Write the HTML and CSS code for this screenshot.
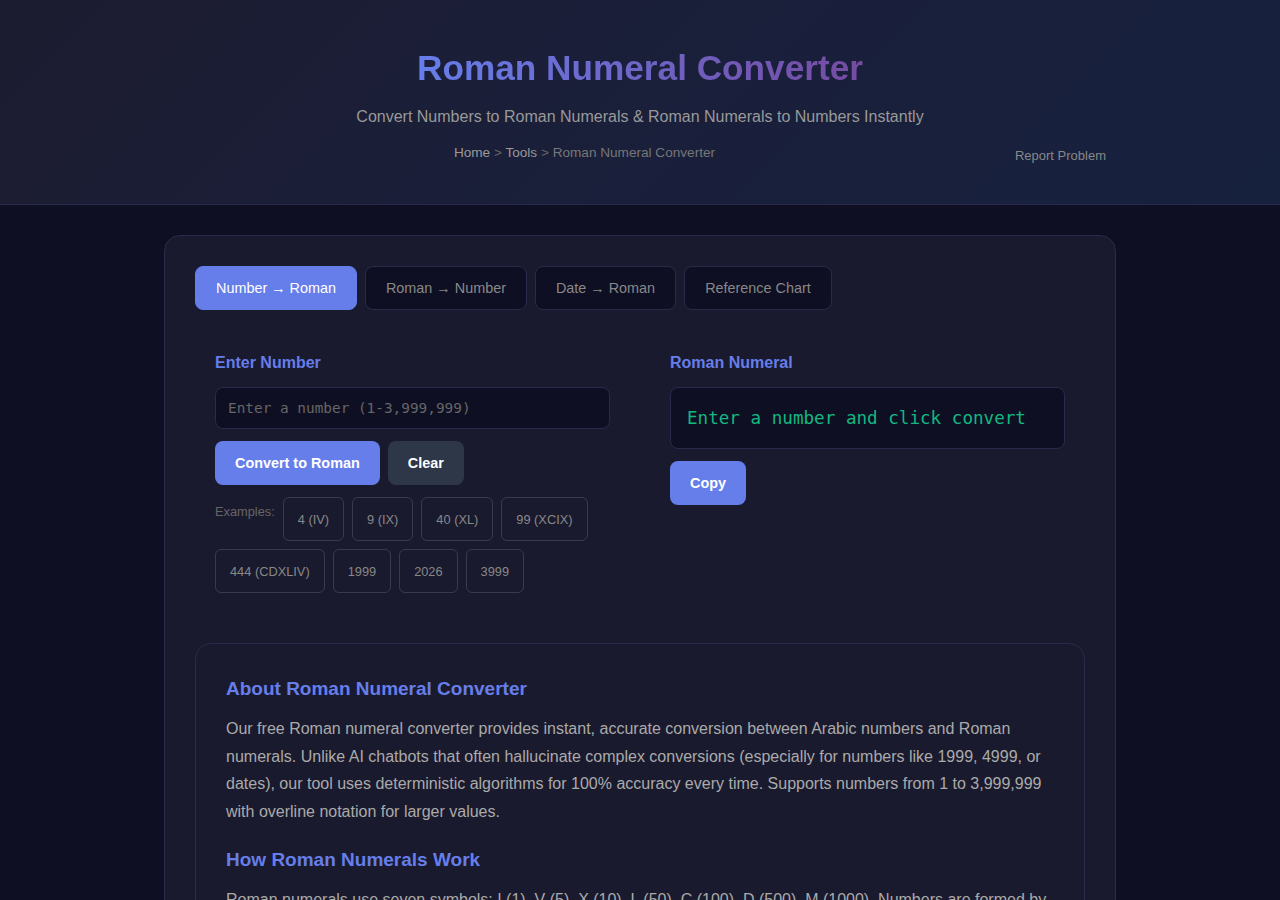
FILE: index.html
```html
<!DOCTYPE html>
<html lang="en">
<head>
  <meta charset="UTF-8">
  <meta name="viewport" content="width=device-width, initial-scale=1.0">
  <title>Roman Numeral Converter</title>
  <link rel="stylesheet" href="styles.css">
</head>
<body>
  <header class="header">
    <h1 class="title">Roman Numeral Converter</h1>
    <p class="subtitle">Convert Numbers to Roman Numerals &amp; Roman Numerals to Numbers Instantly</p>
    <div class="header-row">
      <nav class="breadcrumb">
        <a href="#">Home</a> &gt; <a href="#">Tools</a> &gt; <span>Roman Numeral Converter</span>
      </nav>
      <a href="#" class="report">Report Problem</a>
    </div>
  </header>

  <main class="card">
    <div class="tabs">
      <button class="tab active">Number → Roman</button>
      <button class="tab">Roman → Number</button>
      <button class="tab">Date → Roman</button>
      <button class="tab">Reference Chart</button>
    </div>

    <div class="converter">
      <div class="col">
        <label class="label" for="num">Enter Number</label>
        <input id="num" class="input" type="text" placeholder="Enter a number (1-3,999,999)">
        <div class="actions">
          <button class="btn primary">Convert to Roman</button>
          <button class="btn secondary">Clear</button>
        </div>
        <div class="examples">
          <span class="examples-label">Examples:</span>
          <button class="example">4 (IV)</button>
          <button class="example">9 (IX)</button>
          <button class="example">40 (XL)</button>
          <button class="example">99 (XCIX)</button>
          <button class="example">444 (CDXLIV)</button>
          <button class="example">1999</button>
          <button class="example">2026</button>
          <button class="example">3999</button>
        </div>
      </div>
      <div class="col">
        <div class="label">Roman Numeral</div>
        <div class="output">Enter a number and click convert</div>
        <div class="actions">
          <button class="btn primary">Copy</button>
        </div>
      </div>
    </div>

    <section class="info">
      <h3>About Roman Numeral Converter</h3>
      <p>Our free Roman numeral converter provides instant, accurate conversion between Arabic numbers and Roman numerals. Unlike AI chatbots that often hallucinate complex conversions (especially for numbers like 1999, 4999, or dates), our tool uses deterministic algorithms for 100% accuracy every time. Supports numbers from 1 to 3,999,999 with overline notation for larger values.</p>
      <h3>How Roman Numerals Work</h3>
      <p>Roman numerals use seven symbols: I (1), V (5), X (10), L (50), C (100), D (500), M (1000). Numbers are formed by combining symbols and adding their values, with a smaller symbol placed before a larger one meaning subtraction.</p>
    </section>
  </main>
</body>
</html>
```

FILE: styles.css
```css
body {
  margin: 0;
  font-family: "Liberation Sans", Arial, sans-serif;
  background: #0f0f23;
  color: #e0e0e0;
}
.header {
  background: linear-gradient(135deg, #1c1c30 0%, #1a1f3a 50%, #16213e 100%);
  border-bottom: 1px solid #2a2a4a;
  padding: 48px 20px 41px;
  text-align: center;
}
.title {
  margin: 0;
  font-size: 35.2px;
  font-weight: bold;
  background: linear-gradient(90deg, #667eea, #764ba2);
  -webkit-background-clip: text;
  background-clip: text;
  color: transparent;
  display: inline-block;
}
.subtitle {
  margin: 20px 0 0;
  font-size: 16px;
  color: #999;
}
.header-row {
  max-width: 952px;
  margin: 19px auto 0;
  display: flex;
  align-items: flex-start;
}
.breadcrumb {
  flex: 1;
  font-size: 13.6px;
  color: #666;
}
.breadcrumb a {
  color: #999;
  text-decoration: none;
}
.breadcrumb span {
  color: #777;
}
.report {
  font-size: 13px;
  color: #888;
  text-decoration: none;
  padding: 3px 10px 0;
}

.card {
  max-width: 890px;
  margin: 30px auto 0;
  padding: 30px;
  background: #1a1a2e;
  border: 1px solid #2a2a4a;
  border-radius: 16px;
}
.tabs {
  display: flex;
  gap: 8px;
}
.tab {
  height: 44px;
  padding: 0 20px;
  font-family: inherit;
  font-size: 14.4px;
  color: #888;
  background: #0f0f23;
  border: 1px solid #2a2a4a;
  border-radius: 8px;
  cursor: pointer;
}
.tab.active {
  background: #667eea;
  border-color: #667eea;
  color: #fff;
}

.converter {
  display: grid;
  grid-template-columns: 1fr 1fr;
  gap: 60px;
  padding: 44px 20px 20px;
  margin-bottom: 30px;
}
.label {
  display: block;
  font-size: 16px;
  font-weight: bold;
  color: #667eea;
  margin-bottom: 15px;
}
.input {
  box-sizing: border-box;
  width: 100%;
  height: 42px;
  padding: 0 12px;
  background: #0f0f23;
  border: 1px solid #2a2a4a;
  border-radius: 8px;
  color: #e0e0e0;
  font-family: "DejaVu Sans Mono", monospace;
  font-size: 14.4px;
}
.input::placeholder {
  color: #666;
}
.actions {
  display: flex;
  gap: 8px;
  margin-top: 12px;
}
.btn {
  height: 44px;
  padding: 0 20px;
  font-family: inherit;
  font-size: 14.4px;
  font-weight: bold;
  color: #fff;
  border: none;
  border-radius: 8px;
  cursor: pointer;
}
.btn.primary {
  background: #667eea;
}
.btn.secondary {
  background: #2d3748;
}
.examples {
  display: flex;
  flex-wrap: wrap;
  gap: 8px;
  margin-top: 12px;
}
.examples-label {
  font-size: 12.8px;
  color: #666;
  padding-top: 7px;
}
.example {
  height: 44px;
  padding: 0 14px;
  font-family: inherit;
  font-size: 12.8px;
  color: #888;
  background: transparent;
  border: 1px solid #3a3a4a;
  border-radius: 6px;
  cursor: pointer;
}
.output {
  box-sizing: border-box;
  min-height: 62px;
  padding: 20px 16px 16px;
  background: #0f0f23;
  border: 1px solid #2a2a4a;
  border-radius: 8px;
  font-family: "DejaVu Sans Mono", monospace;
  font-size: 17.6px;
  color: #10b981;
}

.info {
  padding: 22px 30px 30px;
  background: #1a1a2e;
  border: 1px solid #2a2a4a;
  border-radius: 16px;
}
.info h3 {
  margin: 12px 0 15px;
  font-size: 19px;
  color: #667eea;
}
.info p {
  margin: 0 0 24px;
  font-size: 16px;
  line-height: 1.72;
  color: #aaa;
}
```
